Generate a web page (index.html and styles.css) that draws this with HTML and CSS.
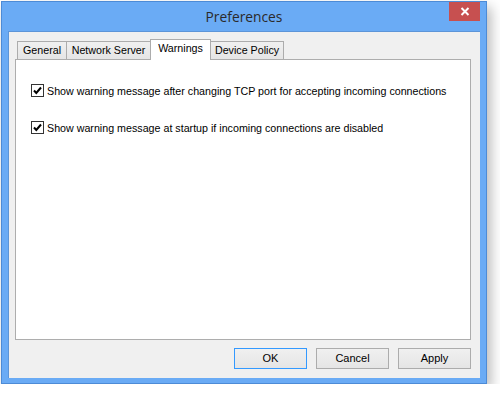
FILE: index.html
```html
<!DOCTYPE html>
<html>
<head>
<meta charset="utf-8">
<link rel="stylesheet" href="styles.css">
</head>
<body>
<div class="window">
  <div class="titlebar">
    <div class="title">Preferences</div>
    <div class="close">
      <svg width="10" height="9" viewBox="0 0 10 9"><path d="M1.5 1 L8.5 8 M8.5 1 L1.5 8" stroke="#fff" stroke-width="2" fill="none"/></svg>
    </div>
  </div>
  <div class="client">
    <div class="tabs">
      <div class="tab t1">General</div>
      <div class="tab t2">Network Server</div>
      <div class="tab t3 active">Warnings</div>
      <div class="tab t4">Device Policy</div>
    </div>
    <div class="panel">
      <label class="row">
        <span class="box"><svg width="11" height="11" viewBox="0 0 11 11"><path d="M2 5.5 L4.3 8 L9 2.5" stroke="#000" stroke-width="2" fill="none"/></svg></span>
        <span class="label">Show warning message after changing TCP port for accepting incoming connections</span>
      </label>
      <label class="row">
        <span class="box"><svg width="11" height="11" viewBox="0 0 11 11"><path d="M2 5.5 L4.3 8 L9 2.5" stroke="#000" stroke-width="2" fill="none"/></svg></span>
        <span class="label">Show warning message at startup if incoming connections are disabled</span>
      </label>
    </div>
    <div class="buttons">
      <div class="btn default">OK</div>
      <div class="btn">Cancel</div>
      <div class="btn">Apply</div>
    </div>
  </div>
</div>
</body>
</html>
```
FILE: styles.css
```css
html, body {
  margin: 0;
  padding: 0;
  background: #fff;
}
body {
  padding: 1px 0 0 1px;
  font-family: "Liberation Sans", Arial, sans-serif;
  font-size: 10.7px;
  color: #000;
}
.window {
  box-sizing: border-box;
  width: 486px;
  height: 383px;
  border: 1px solid #4d8bd6;
  background: #6aabf5;
  box-shadow: 4px 6px 12px rgba(0,0,0,0.28);
  display: flex;
  flex-direction: column;
  padding: 0 6px 5px 6px;
}
.titlebar {
  height: 29px;
  display: flex;
  align-items: flex-start;
  justify-content: center;
  position: relative;
}
.title {
  font-family: "Open Sans", "Noto Sans", sans-serif;
  font-size: 13.8px;
  color: #2a2a2a;
  margin-top: 5px;
  margin-left: 0;
}
.close {
  position: absolute;
  right: 0;
  top: 0;
  width: 31px;
  height: 19px;
  background: #c75050;
  display: flex;
  align-items: center;
  justify-content: center;
}
.client {
  box-sizing: border-box;
  flex: 1;
  background: #f0f0f0;
  border: 1px solid #5d95d8;
  border-right: none;
  border-bottom: none;
  display: flex;
  flex-direction: column;
  padding: 7px 9px 0 6px;
}
.tabs {
  display: flex;
  align-items: flex-end;
  height: 20px;
  margin-left: 2px;
  position: relative;
  z-index: 1;
}
.tab {
  box-sizing: border-box;
  height: 18px;
  border: 1px solid #acacac;
  border-bottom: none;
  background: linear-gradient(#f0f0f0, #e5e5e5);
  text-align: center;
  line-height: 17px;
  margin-left: -1px;
}
.t1 { width: 50px; margin-left: 0; }
.t2 { width: 85px; }
.t3 { width: 61px; }
.t4 { width: 74px; }
.tab.active {
  height: 21px;
  background: #fff;
  line-height: 17px;
  margin-bottom: -1px;
  padding-bottom: 3px;
}
.panel {
  box-sizing: border-box;
  width: 456px;
  height: 281px;
  background: #fff;
  border: 1px solid #adadad;
  padding: 24px 15px 0 15px;
  display: flex;
  flex-direction: column;
  gap: 24px;
}
.row {
  display: flex;
  align-items: center;
  height: 13px;
}
.box {
  box-sizing: border-box;
  width: 13px;
  height: 13px;
  border: 1px solid #333;
  background: #fff;
  display: flex;
  align-items: center;
  justify-content: center;
  margin-right: 3px;
}
.box svg { display: block; }
.label {
  white-space: nowrap;
}
.buttons {
  display: flex;
  justify-content: flex-end;
  gap: 9px;
  margin-top: 8px;
  padding-right: 0;
}
.btn {
  box-sizing: border-box;
  width: 73px;
  height: 21px;
  border: 1px solid #acacac;
  background: linear-gradient(#f0f0f0, #e5e5e5);
  text-align: center;
  line-height: 19px;
  font-size: 11px;
}
.btn.default {
  border-color: #3399ff;
}
```
